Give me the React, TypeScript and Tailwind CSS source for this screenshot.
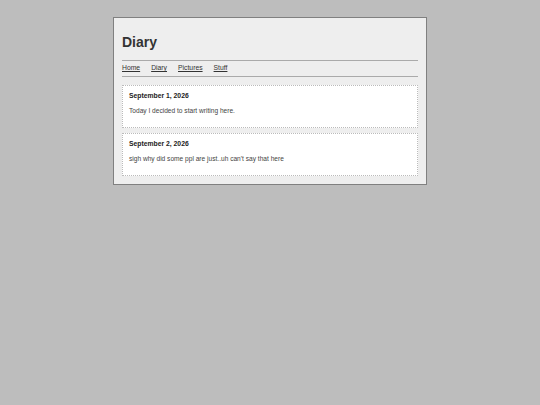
const entries = [
  { date: 'September 1, 2026', text: 'Today I decided to start writing here.' },
  { date: 'September 2, 2026', text: "sigh why did some ppl are just..uh can't say that here" },
];

const links = ['Home', 'Diary', 'Pictures', 'Stuff'];

export default function App() {
  return (
    <div className="min-h-[405px] w-full bg-[#bdbdbd] pt-[17px] font-['Liberation_Sans',Arial,sans-serif]">
      <div className="mx-auto w-[314px] border border-[#808080] bg-[#eeeeee] px-2 pb-2">
        <h1 className="mt-[16px] text-[14px] font-bold leading-[17px] text-[#333]">Diary</h1>
        <nav className="mt-[9px] flex h-[17px] items-center gap-[11px] border-y border-[#aaa] text-[6.8px] text-[#333]">
          {links.map((l) => (
            <a key={l} href="#" className="underline">
              {l}
            </a>
          ))}
        </nav>
        <div className="mt-[8px] flex flex-col gap-[5px]">
          {entries.map((e) => (
            <div key={e.date} className="h-[43px] border border-dotted border-[#bbb] bg-white px-[6px] pt-[6px]">
              <div className="text-[6.8px] font-bold leading-[8px] text-[#222]">{e.date}</div>
              <p className="mt-[7px] text-[6.6px] leading-[8px] text-[#444]">{e.text}</p>
            </div>
          ))}
        </div>
      </div>
    </div>
  );
}
